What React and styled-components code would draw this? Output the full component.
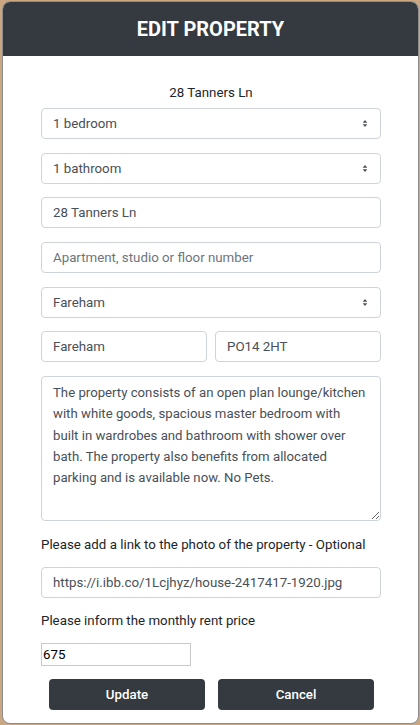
import React from 'react';
import styled, {createGlobalStyle} from 'styled-components';

const GlobalStyle = createGlobalStyle`
  html, body {
    margin: 0;
    padding: 0;
    background: #c9a782;
  }
  body {
    font-family: Roboto, "Liberation Sans", sans-serif;
  }
`;

const FONT = 13.3;

const Modal = styled.div`
  box-sizing: border-box;
  width: 417px;
  height: 723px;
  margin: 1px 0 0 2px;
  background: #fff;
  border: 1px solid #8d8d8d;
  border-radius: 8px;
  overflow: hidden;
  display: flex;
  flex-direction: column;
`;

const Header = styled.div`
  height: 54px;
  flex-shrink: 0;
  background: #343a40;
  color: #fff;
  display: flex;
  align-items: center;
  justify-content: center;
  font-size: 20px;
  font-weight: 700;
`;

const Body = styled.div`
  padding: 0 37px 0 38px;
  display: flex;
  flex-direction: column;
`;

const Address = styled.div`
  text-align: center;
  font-size: ${FONT}px;
  color: #212529;
  margin: 28px 0 6px;
  line-height: 18px;
`;

const Fields = styled.div`
  display: flex;
  flex-direction: column;
  gap: 13.7px;
`;

const Field = styled.input`
  box-sizing: border-box;
  width: 100%;
  height: 31px;
  padding: 0 11px;
  border: 1px solid #ced4da;
  border-radius: 4px;
  font-family: Roboto, "Liberation Sans", sans-serif;
  font-size: ${FONT}px;
  color: #495057;
  background: #fff;
  outline: none;
  &::placeholder {
    color: #6c757d;
  }
`;

const SelectBox = styled.div`
  box-sizing: border-box;
  height: 31px;
  padding: 0 12px 0 11px;
  border: 1px solid #ced4da;
  border-radius: 4px;
  font-size: ${FONT}px;
  color: #495057;
  display: flex;
  align-items: center;
  justify-content: space-between;
`;

const Row = styled.div`
  display: grid;
  grid-template-columns: 1fr 1fr;
  gap: 8px;
`;

const TextArea = styled.textarea`
  box-sizing: border-box;
  width: 100%;
  height: 145px;
  padding: 5px 14px 5px 11px;
  border: 1px solid #ced4da;
  border-radius: 4px;
  font-family: Roboto, "Liberation Sans", sans-serif;
  font-size: 13.2px;
  line-height: 21.3px;
  color: #495057;
  resize: vertical;
  outline: none;
  display: block;
`;

const Label = styled.div`
  font-size: ${FONT}px;
  color: #212529;
  line-height: 18px;
  margin: ${p => p.top}px 0 ${p => p.bottom}px;
`;

const RentInput = styled.input`
  box-sizing: border-box;
  width: 150px;
  height: 23px;
  padding: 0 1px;
  border: 1px solid #c9c9c9;
  font-family: Roboto, "Liberation Sans", sans-serif;
  font-size: ${FONT}px;
  color: #000;
  outline: none;
`;

const Buttons = styled.div`
  display: flex;
  justify-content: space-between;
  padding: 0 7px 0 8px;
  margin-top: 13px;
`;

const Button = styled.button`
  width: 156px;
  height: 31px;
  border: none;
  border-radius: 4px;
  background: #343a40;
  color: #fff;
  font-family: Roboto, "Liberation Sans", sans-serif;
  font-size: ${FONT}px;
  font-weight: 500;
`;

const Caret = () => (
    <svg width="6" height="9" viewBox="0 0 6 9">
        <path d="M3 1 L5.3 3.7 H0.7 Z" fill="#495057"/>
        <path d="M3 8 L5.3 5.3 H0.7 Z" fill="#495057"/>
    </svg>
);

const Select = ({children}) => (
    <SelectBox>
        <span>{children}</span>
        <Caret/>
    </SelectBox>
);

const description = "The property consists of an open plan lounge/kitchen with white goods, spacious master bedroom with built in wardrobes and bathroom with shower over bath. The property also benefits from allocated parking and is available now. No Pets.";

const App = () => {
    return (
        <>
            <GlobalStyle/>
            <Modal>
                <Header>EDIT PROPERTY</Header>
                <Body>
                    <Address>28 Tanners Ln</Address>
                    <Fields>
                        <Select>1 bedroom</Select>
                        <Select>1 bathroom</Select>
                        <Field defaultValue="28 Tanners Ln"/>
                        <Field placeholder="Apartment, studio or floor number"/>
                        <Select>Fareham</Select>
                        <Row>
                            <Field defaultValue="Fareham"/>
                            <Field defaultValue="PO14 2HT"/>
                        </Row>
                        <TextArea defaultValue={description}/>
                    </Fields>
                    <Label top={15} bottom={13}>Please add a link to the photo of the property - Optional</Label>
                    <Field defaultValue="https://i.ibb.co/1Lcjhyz/house-2417417-1920.jpg"/>
                    <Label top={14} bottom={13}>Please inform the monthly rent price</Label>
                    <RentInput defaultValue="675"/>
                    <Buttons>
                        <Button>Update</Button>
                        <Button>Cancel</Button>
                    </Buttons>
                </Body>
            </Modal>
        </>
    );
};

export default App;
